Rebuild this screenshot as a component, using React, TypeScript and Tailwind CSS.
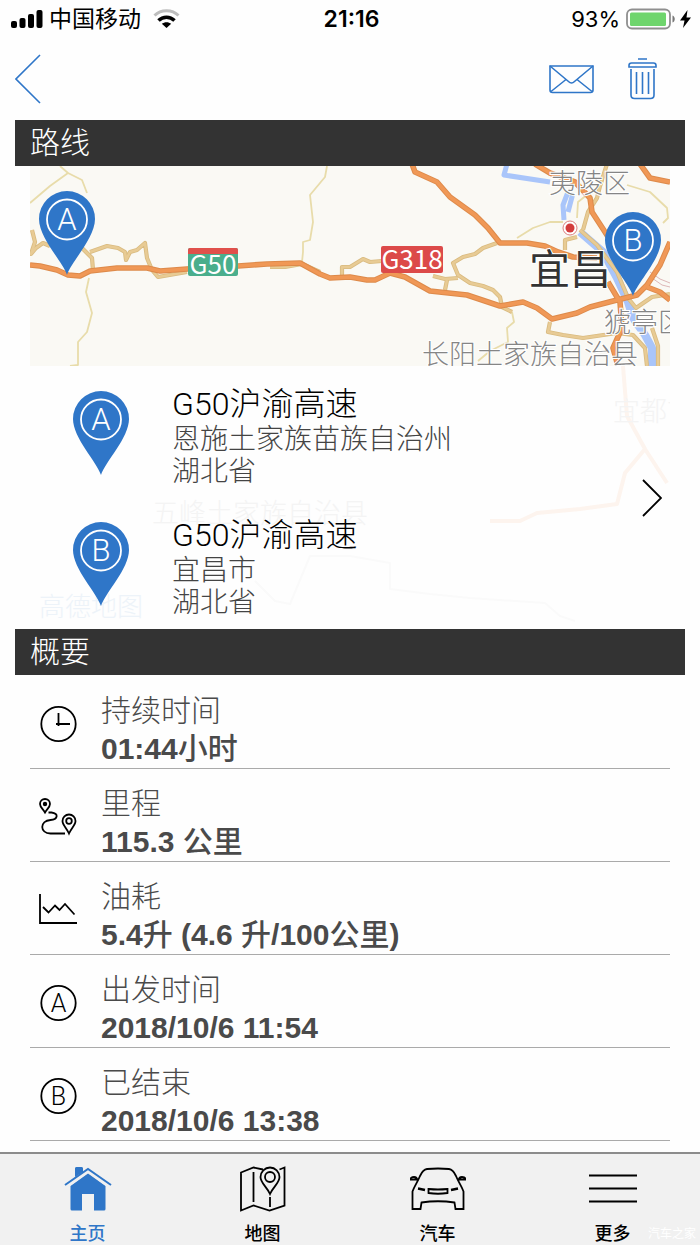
import type { ReactNode } from "react";

const sans = "font-['Liberation_Sans','Noto_Sans_CJK_SC',sans-serif]";
const light = "font-['Roboto','Noto_Sans_CJK_SC',sans-serif] font-light";

type PinProps = { letter: string };

function PinShape({ letter }: PinProps) {
  return (
    <>
      <path d="M28 84C24 71 0 47 0 28a28 28 0 0 1 56 0C56 47 32 71 28 84Z" fill="#2f76c8" />
      <circle cx="28" cy="28.500" r="20" fill="none" stroke="#fff" strokeWidth="1.800" />
      <text x="28" y="39" fontSize="31" textAnchor="middle" fill="#fff" className={light}>
        {letter}
      </text>
    </>
  );
}

function StatusBar() {
  return (
    <div className="grid h-[38px] grid-cols-3 items-center pr-[8px] pl-[11px] font-['Inter','Noto_Sans_CJK_SC',sans-serif] text-[22px] text-black">
      <div className="flex items-center gap-[6px]">
        <svg width="32" height="20" viewBox="0 0 32 20" fill="#000">
          <rect x="0" y="12" width="6" height="7" rx="2" />
          <rect x="8.500" y="9" width="6" height="10" rx="2" />
          <rect x="17" y="5" width="6" height="14" rx="2" />
          <rect x="25.500" y="1" width="6" height="18" rx="2" />
        </svg>
        <span className="text-[23px] whitespace-nowrap">中国移动</span>
        <svg className="ml-[6px]" width="27" height="20" viewBox="0 0 27 20" fill="none">
          <path d="M1.500 6.500C8 0 19 0 25.500 6.500" stroke="#bdbdbd" strokeWidth="3" />
          <path d="M5.500 11.500C10 7 17 7 21.500 11.500" stroke="#000" strokeWidth="3.500" />
          <path d="M13.500 19 8.800 14.800c2.600-2.200 6.800-2.200 9.400 0Z" fill="#000" />
        </svg>
      </div>
      <div className="text-center text-[23px] font-semibold">21:16</div>
      <div className="flex items-center justify-end gap-[6px]">
        <span>93%</span>
        <svg width="66" height="22" viewBox="0 0 66 22">
          <rect x="1" y="1.500" width="43" height="19" rx="5" fill="#fff" stroke="#8f8f8f" strokeWidth="1.800" />
          <rect x="4" y="4.500" width="36" height="13.500" rx="1.500" fill="#6fd56d" />
          <path d="M46.500 7.500c3 1 3 6 0 7Z" fill="#777" />
          <path d="M61.500 2 54 12.500h4.500L57 20l8-10.500h-4.500Z" fill="#000" />
        </svg>
      </div>
    </div>
  );
}

function TopNav() {
  return (
    <header className="flex h-[82px] items-center justify-between pr-[43px] pl-[15px] text-[#2f76c8]">
      <button type="button" aria-label="返回" className="cursor-pointer">
        <svg width="26" height="50" viewBox="0 0 26 50" fill="none" stroke="currentColor" strokeWidth="1.600">
          <path d="M25 1 1 25l24 24" />
        </svg>
      </button>
      <div className="flex items-center gap-[34px]">
        <button type="button" aria-label="邮件" className="cursor-pointer">
          <svg width="45" height="42" viewBox="0 0 45 42" fill="none" stroke="currentColor" strokeWidth="1.600">
            <path d="M1 8h43v24q0 2.500-2.500 2.500h-38Q1 34.500 1 32Z" />
            <path d="m1 8 18.500 15.500q3 3 6 0L44 8M2 33.500l15-12M43 33.500l-15-12" />
          </svg>
        </button>
        <button type="button" aria-label="删除" className="cursor-pointer">
          <svg width="29" height="42" viewBox="0 0 29 42" fill="none" stroke="currentColor" strokeWidth="1.600">
            <path d="M10 1h9M1 9V7.500q0-2.500 2.500-2.500h22q2.500 0 2.500 2.500V9Z" />
            <path d="M3 11v26q0 3.500 3.500 3.500h16q3.500 0 3.500-3.500V11M8.500 14v22M14.500 14v22M20.500 14v22" />
          </svg>
        </button>
      </div>
    </header>
  );
}

function SectionTitle({ children }: { children: ReactNode }) {
  return (
    <h2 className={`mx-[15px] h-[46px] bg-[#333] pl-[15px] text-[30px] leading-[46px] text-white ${light}`}>
      {children}
    </h2>
  );
}

const highways = [
  "M0 99 10 100 27 104 38 109 50 110 60 105 87 102 117 102 130 105 157 103 208 100 237 98 270 97 290 108 300 112 320 111 337 114 345 114 360 107 375 111 400 125 437 129 470 140 493 136 507 142 522 153 547 147 560 141 587 134 607 129 617 119 630 99 640 76",
  "M382-2 385 6 407 16 420 31 445 49 458 62 470 77 497 77 515 80 528 86 543 91 567 92",
  "M617 121 630 126 640 134",
  "M505-2 520 7 545 16 560 32 562 46 575 66 590 90",
  "M610-2 620 12 640 16",
  "M578 116 590 136 592 162 583 182 588 200",
];

const roads = [
  "M52 82 62 92 63 104M60 86 77 80 88 82 95 86 96 94 100 86 107 84 115 77 117 92 122 104 128 111 157 106",
  "M2 64 5 76 1 88 6 82 13 77 20 80",
  "M240 101 255 101 272 98 290 106",
  "M312 109V101H320L333 93 340 96 352 95",
  "M467 77 453 82 445 88 433 91 423 97 428 109 440 117 453 120 463 124 470 131 472 141 482 146",
  "M403 110 415 113 428 112M417 114 415 124",
  "M520 156 518 166 533 169 553 172 587 167 603 169 615 182 617 200",
  "M577-2 570 20 567 32 558 46 553 64M550 64 567 79 587 106 598 132 606 142 622 131 640 128",
  "M535 84V74L547 71M622 162 628 180 628 200",
];

const lanes = [
  "M30 0 38 7 20 20 0 37M38 7 52 14 57 27",
  "M59 112 56 126 62 147 57 166 48 176 48 199 40 200",
  "M297 0 295 11 280 29 283 56 280 74 273 76 273 86 272 96",
  "M482 146 484 156 477 162 478 176 460 185 448 195",
  "M487 72 503 62 520 56 533 56",
  "M597 19 620 26 637 42 638 52 633 57",
  "M547 52 548 36 563 24",
];

function RouteMap() {
  return (
    <svg
      className="block h-[200px] w-full"
      viewBox="0 0 640 200"
      preserveAspectRatio="xMidYMid slice"
      role="img"
      aria-label="路线地图"
    >
      <rect x="-640" width="1920" height="200" fill="#faf9f4" />
      <g fill="none" strokeLinejoin="round">
        <g stroke="#a9c5fa" strokeWidth="5">
          <path d="M477-2 474 9 520 16" />
          <path d="M538 26 533 39 534 54M543 27 538 46" />
          <path d="M550 66 573 86 587 112 598 136 603 152 615 169 622 182 622 200" strokeWidth="8" />
        </g>
        {lanes.map((d) => (
          <path key={d} d={d} stroke="#e8dcaa" strokeWidth="1.800" />
        ))}
        {roads.map((d) => (
          <path key={d} d={d} stroke="#d9bb80" strokeWidth="4.200" />
        ))}
        {roads.map((d) => (
          <path key={d} d={d} stroke="#e8cb94" strokeWidth="2.500" />
        ))}
        <path d="M620 106 630 113 640 117M622 112 632 119 640 121" stroke="#dcb6b6" />
        {highways.map((d) => (
          <path key={d} d={d} stroke="#dd8a4a" strokeWidth="5.600" />
        ))}
        {highways.map((d) => (
          <path key={d} d={d} stroke="#f09856" strokeWidth="3.600" />
        ))}
      </g>

      <rect x="158" y="82" width="50" height="28" rx="2" fill="#4aae8c" />
      <path d="M158 88v-4q0-2 2-2h46q2 0 2 2v4Z" fill="#e0504b" />
      <rect x="351" y="80" width="62" height="27" rx="2" fill="#dc4a49" />
      <g className="font-['Noto_Sans_CJK_SC',sans-serif]" fill="#fff" fontSize="26" textAnchor="middle">
        <text x="183" y="108">G50</text>
        <text x="382" y="103">G318</text>
      </g>

      <circle cx="540" cy="62" r="7" fill="#fff" stroke="#dc8080" />
      <circle cx="540" cy="62" r="4.500" fill="#d33c3c" />

      <g
        className="font-['Noto_Sans_CJK_SC',sans-serif] font-light"
        fill="#858585"
        fontSize="27"
        stroke="#fff"
        strokeWidth="2"
        paintOrder="stroke"
      >
        <text x="519" y="27">夷陵区</text>
        <text x="574" y="166">猇亭区</text>
        <text x="392" y="198">长阳土家族自治县</text>
        <text x="499" y="118" fontSize="41" fill="#333" className="font-normal">
          宜昌
        </text>
      </g>

      <g transform="translate(9 25)">
        <PinShape letter="A" />
      </g>
      <g transform="translate(575 46)">
        <PinShape letter="B" />
      </g>
    </svg>
  );
}

// washed out lower part of the map, sits behind the two addresses
function FadedMap() {
  return (
    <svg
      className="absolute inset-0 h-full w-full"
      viewBox="0 0 640 263"
      preserveAspectRatio="xMidYMid slice"
      aria-hidden="true"
    >
      <g fill="none" strokeWidth="4" strokeLinejoin="round">
        <path d="M460 155H490L507 147 550 143 587 138 595 107 615 83 637 117M593 0 597 50 615 83" stroke="#fdf4ee" />
        <path
          d="M225 215 245 235 260 238 280 190 320 190 360 197V223L400 228 440 232 515 237 530 250 545 255"
          stroke="#fafafa"
          strokeWidth="2"
        />
      </g>
      <g className="font-['Noto_Sans_CJK_SC',sans-serif] font-light" fontSize="27" fill="#f4f4f4">
        <text x="583" y="55">宜都市</text>
        <text x="122" y="157">五峰土家族自治县</text>
        <text x="9" y="250" fontSize="26" fill="#edf3f9">
          高德地图
        </text>
      </g>
    </svg>
  );
}

const stops = [
  { letter: "A", road: "G50沪渝高速", city: "恩施土家族苗族自治州", province: "湖北省" },
  { letter: "B", road: "G50沪渝高速", city: "宜昌市", province: "湖北省" },
];

function RouteCard() {
  return (
    <div className="mx-[30px]">
      <RouteMap />
      <div className="relative">
        <FadedMap />
        <div className="relative flex items-center justify-between pr-[8px] pl-[43px]">
          <ul className="flex flex-col gap-[27px] pt-[18px] pb-[10px]">
            {stops.map((stop) => (
              <li key={stop.letter} className={`flex items-start gap-[43px] ${light}`}>
                <svg className="mt-[7px]" width="56" height="84" viewBox="0 0 56 84">
                  <PinShape letter={stop.letter} />
                </svg>
                <div>
                  <p className="text-[32px] leading-[40px] text-black">{stop.road}</p>
                  <p className="text-[28px] leading-[32px] text-[#444]">{stop.city}</p>
                  <p className="text-[28px] leading-[32px] text-[#444]">{stop.province}</p>
                </div>
              </li>
            ))}
          </ul>
          <button type="button" aria-label="查看路线" className="cursor-pointer">
            <svg width="20" height="38" viewBox="0 0 20 38" fill="none" stroke="#000" strokeWidth="1.800">
              <path d="m1 1 18 18L1 37" />
            </svg>
          </button>
        </div>
      </div>
    </div>
  );
}

function RowIcon({ children }: { children: ReactNode }) {
  return (
    <svg
      className="mt-[3px] shrink-0"
      width="40"
      height="40"
      viewBox="0 0 40 40"
      fill="none"
      stroke="#000"
      strokeWidth="1.800"
    >
      {children}
    </svg>
  );
}

function LetterIcon({ letter }: PinProps) {
  return (
    <RowIcon>
      <circle cx="20.500" cy="20" r="17.200" />
      <text x="20.500" y="28.500" fontSize="25" textAnchor="middle" fill="#000" stroke="none" className={light}>
        {letter}
      </text>
    </RowIcon>
  );
}

const summary = [
  {
    label: "持续时间",
    value: "01:44小时",
    icon: (
      <RowIcon>
        <circle cx="20.500" cy="20" r="17.200" />
        <path d="M20.500 9v13M18 20h14" />
      </RowIcon>
    ),
  },
  {
    label: "里程",
    value: "115.3 公里",
    icon: (
      <RowIcon>
        <path d="M7 15.500C5 12 2 10 2 7a5 5 0 0 1 10 0c0 3-3 5-5 8.500Z" />
        <circle cx="7" cy="7" r="1.300" fill="#000" />
        <path d="M31 36.500C28.500 31 24.500 28 24.500 24a6.500 6.500 0 0 1 13 0c0 4-4 7-6.500 12.500Z" />
        <circle cx="31" cy="24" r="2.800" />
        <path d="M10.500 15.500h3c8 1 6 7-1 7.500-11 1-11 13 0 13.500H27" />
      </RowIcon>
    ),
  },
  {
    label: "油耗",
    value: "5.4升 (4.6 升/100公里)",
    icon: (
      <RowIcon>
        <path d="M2 4v29h37" />
        <path d="m5 17 5.500 5.500 6.500-7 4.500 4.500 5.500-6 9.500 10.500" />
      </RowIcon>
    ),
  },
  { label: "出发时间", value: "2018/10/6 11:54", icon: <LetterIcon letter="A" /> },
  { label: "已结束", value: "2018/10/6 13:38", icon: <LetterIcon letter="B" /> },
];

// digits are bold, the Chinese units one step lighter
function Value({ text }: { text: string }) {
  return (
    <>
      {text.split(/([\u4e00-\u9fff]+)/).map((part, i) => (
        <span key={i} className={i % 2 ? "font-medium" : "font-bold"}>
          {part}
        </span>
      ))}
    </>
  );
}

function Summary() {
  return (
    <dl className="mx-[30px] pt-px">
      {summary.map((item) => (
        <div key={item.label} className="flex items-center gap-[23px] border-b border-[#aaa] pl-2">
          {item.icon}
          <div className="pt-4">
            <dt className={`text-[30px] leading-[38px] text-[#4a4a4a] ${light}`}>{item.label}</dt>
            <dd className={`text-[30px] leading-[38px] text-[#4a4a4a] ${sans}`}>
              <Value text={item.value} />
            </dd>
          </div>
        </div>
      ))}
    </dl>
  );
}

const tabs = [
  {
    label: "主页",
    active: true,
    icon: (
      <g fill="currentColor">
        <path d="M15 4q0-2 2-2h4q2 0 2 2v2l-8 7Z" />
        <path d="M28 8.500 45.500 21v23q0 1.500-1.500 1.500H34V29H22v16.500H12q-1.500 0-1.500-1.500V21Z" />
        <path d="M6 20 28 4l22 16" fill="none" stroke="#f1f1f1" strokeWidth="6" />
        <path d="M15 12V4q0-2 2-2h4q2 0 2 2v3Z" />
        <path d="M5 20 28 4l23 16" fill="none" stroke="currentColor" strokeWidth="2" />
      </g>
    ),
  },
  {
    label: "地图",
    active: false,
    icon: (
      <g fill="none" stroke="currentColor" strokeWidth="1.800">
        <path d="M28 4.500 18.500 2.500 6 7.500v38l12.500-5 16 5 15-5V2.500l-5 2" />
        <path d="M18.500 7v30M35 32v10" />
        <path d="M35 29C32 22 25.500 18 25.500 12a9.500 9.500 0 0 1 19 0c0 6-6.500 10-9.500 17Z" fill="#f1f1f1" />
        <circle cx="35" cy="12" r="5" />
      </g>
    ),
  },
  {
    label: "汽车",
    active: false,
    icon: (
      <g fill="none" stroke="currentColor" strokeWidth="1.800">
        <path d="M2.500 44V26.500C4 22 7.500 17 10 11q3-6.500 7-7 11-1 22 0 4 .500 7 7c2.500 6 6 11 7.500 15.500V44h-8l-1-6.500q-16.500-2.500-33 0l-1 6.500Z" />
        <path d="M7.500 15.500Q7 12 4 12q-3.500 0-3.500 2.500h6M48.500 15.500Q49 12 52 12q3.500 0 3.500 2.500h-6" />
        <path d="M18.500 24q9.500 1 19 0v4q-9.500 1.500-19 0Z" />
        <path d="m8 23.500 7 1.500M48 23.500 41 25" strokeWidth="2.500" />
      </g>
    ),
  },
  {
    label: "更多",
    active: false,
    icon: <path d="M4 10.500h48M4 23.500h48M4 36.500h48" stroke="currentColor" strokeWidth="2" />,
  },
];

function TabBar() {
  return (
    <nav className="relative grid grid-cols-4 border-t-2 border-[#8c8c8c] bg-[#f1f1f1]">
      {tabs.map((tab) => (
        <a
          key={tab.label}
          href="#"
          aria-current={tab.active ? "page" : undefined}
          className={`flex flex-col items-center gap-[7px] pt-[11px] pb-px ${tab.active ? "text-[#2f76c8]" : "text-black"}`}
        >
          <svg width="56" height="48" viewBox="0 0 56 48">
            {tab.icon}
          </svg>
          <span className="font-['Noto_Sans_CJK_SC',sans-serif] text-[18px] leading-6 font-medium">{tab.label}</span>
        </a>
      ))}
      <span className="absolute right-1 bottom-0 font-['Noto_Sans_CJK_SC',sans-serif] text-[12px] leading-6 text-white">
        汽车之家
      </span>
    </nav>
  );
}

export default function App() {
  return (
    <div className="flex min-h-screen flex-col bg-[#fefefe]">
      <StatusBar />
      <TopNav />
      <main className="flex-1 pb-[10px]">
        <SectionTitle>路线</SectionTitle>
        <RouteCard />
        <SectionTitle>概要</SectionTitle>
        <Summary />
      </main>
      <TabBar />
    </div>
  );
}
